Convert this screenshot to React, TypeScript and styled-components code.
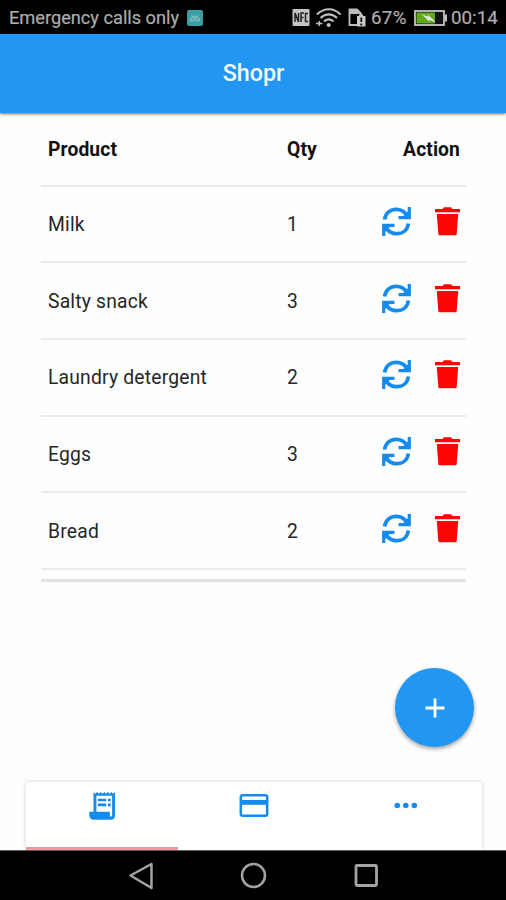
import React from "react";
import styled, { createGlobalStyle } from "styled-components";

const BLUE = "#2196f3";
const ICON_BLUE = "#168bee";

const GlobalStyle = createGlobalStyle`
  * { box-sizing: border-box; }
  body { margin: 0; background: #fefefe; font-family: Roboto, "Noto Sans", sans-serif; }
  svg { display: block; flex: none; }
`;

const Screen = styled.div`
  width: 506px;
  height: 900px;
  display: flex;
  flex-direction: column;
  overflow: hidden;
  background: #fefefe;
`;

const StatusBar = styled.div`
  height: 34px;
  flex: none;
  display: flex;
  align-items: center;
  padding: 2px 7px 0 9px;
  background: #000;
  color: #adadad;
  font-size: 18px;
  line-height: 32px;
  white-space: nowrap;
`;

const Carrier = styled.span`
  width: 178px;
  font-size: 18.2px;
  -webkit-text-stroke: 0.2px #adadad;
`;

const StatusIcons = styled.div`
  margin-left: auto;
  display: flex;
  align-items: center;
`;

const Percent = styled.span`
  width: 42px;
  margin-left: -1px;
  margin-right: 1px;
  font-size: 18.8px;
  letter-spacing: 0.3px;
  -webkit-text-stroke: 0.2px #adadad;
`;

const Clock = styled.span`
  width: 48px;
  font-size: 18.8px;
  -webkit-text-stroke: 0.2px #adadad;
`;

const Header = styled.header`
  height: 79px;
  flex: none;
  display: flex;
  align-items: center;
  justify-content: center;
  padding: 0 0 2px 1px;
  background: ${BLUE};
  color: #f4faff;
  font-size: 23.3px;
  font-weight: 500;
  box-shadow: 0 1px 3px rgba(0, 0, 0, 0.6);
  z-index: 1;
`;

const Main = styled.main`
  flex: 1;
  display: flex;
  flex-direction: column;
  padding: 0 40px 0 41px;
`;

const Row = styled.div<{ $head?: boolean }>`
  height: ${(p) => (p.$head ? "73.5px" : "76.7px")};
  flex: none;
  display: grid;
  grid-template-columns: 239px 60px 1fr;
  align-items: center;
  padding: 0 6px 0 7px;
  border-bottom: 2px solid #ebebeb;
  color: ${(p) => (p.$head ? "#111" : "#262626")};
  font-size: 19.3px;
  font-weight: ${(p) => (p.$head ? 700 : 400)};
  letter-spacing: ${(p) => (p.$head ? "0.1px" : "0.2px")};
`;

const Label = styled.span<{ $end?: boolean }>`
  padding-top: 1px;
  text-align: ${(p) => (p.$end ? "right" : "left")};
`;

const Actions = styled.div`
  display: flex;
  justify-content: flex-end;
  gap: 24px;
  padding-bottom: 5px;
`;

const TableEnd = styled.div`
  flex: none;
  height: 3px;
  margin-top: 9px;
  background: #e2e2e2;
`;

const AddButton = styled.button`
  width: 79px;
  height: 79px;
  margin: auto -8px 35px auto;
  flex: none;
  display: flex;
  align-items: center;
  justify-content: center;
  border: 0;
  border-radius: 50%;
  background: ${BLUE};
  box-shadow: 0 2px 4px rgba(0, 0, 0, 0.38);
`;

const Tabs = styled.nav`
  height: 68px;
  flex: none;
  display: grid;
  grid-template-columns: repeat(3, 1fr);
  margin: 0 24px 0 26px;
  background: #fff;
  box-shadow: 0 0 4px rgba(0, 0, 0, 0.2);
`;

const Tab = styled.div<{ $active?: boolean }>`
  display: flex;
  justify-content: center;
  align-items: flex-start;
  padding-top: 7px;
  border-bottom: 3px solid ${(p) => (p.$active ? "#ee9a9d" : "transparent")};
`;

const NavBar = styled.div`
  height: 50px;
  flex: none;
  display: flex;
  justify-content: center;
  align-items: center;
  gap: 83px;
  background: #000;
  border-top: 1px solid #5b5b5b;
  z-index: 1;
`;

const RefreshIcon = () => (
  <svg width="29" height="29" viewBox="0 0 29 29" fill="none" stroke={ICON_BLUE} strokeWidth="3.7">
    <path d="M2.600 12.600C3.500 5.900 8.500 2.300 14.400 2.300c4.400 0 8 2 10.800 6.100" />
    <path d="M26.400 16.400c-.9 6.700-5.900 10.300-11.800 10.300-4.400 0-8-2-10.800-6.100" />
    <path d="M27.300 0v10.600H16.500M1.700 29V18.400h10.800" strokeWidth="3.200" />
    <path d="M20.500 10 27 3v7zM8.500 19 2 26v-7z" fill={ICON_BLUE} stroke="none" />
  </svg>
);

const TrashIcon = () => (
  <svg width="25" height="29" viewBox="0 0 25 29" fill="#fb0505">
    <path d="M0 1.900h7.500L9 .3h7l1.500 1.600H25v3.400H0z" />
    <path d="M1.800 7h21.400L21.700 27a1.400 1.400 0 0 1-1.400 1.300H4.700A1.400 1.400 0 0 1 3.300 27z" />
  </svg>
);

const items = [
  { name: "Milk", qty: 1 },
  { name: "Salty snack", qty: 3 },
  { name: "Laundry detergent", qty: 2 },
  { name: "Eggs", qty: 3 },
  { name: "Bread", qty: 2 },
];

export default function App() {
  return (
    <Screen>
      <GlobalStyle />
      <StatusBar>
        <Carrier>Emergency calls only</Carrier>
        <svg width="16" height="16" viewBox="0 0 16 16">
          <rect width="16" height="16" rx="2" fill="#3a9da3" />
          <path d="M3 11a5 5 0 0 1 10 0zM4 4l2 3M12 4l-2 3" fill="#73b8ba" stroke="#73b8ba" />
          <path d="M5.500 9h1.500M9 9h1.500" stroke="#2f858b" />
        </svg>
        <StatusIcons>
          <svg width="80" height="20" viewBox="0 0 80 20" fill="none" stroke="#bdbdbd">
            <rect x=".5" y="1" width="17" height="17" rx="1" fill="#c4c4c4" stroke="none" />
            <path d="M3 14V5l3.500 9V5M9 14V5h3M9 9.500h2.500M16 5.500h-2.500v8H16" stroke="#222" strokeWidth="1.500" />
            <path d="M25 6.500c7-7 17-7 23.500 0M28.500 10c5-4.800 11.500-4.800 16.500 0M32 13.500c3-2.600 6.500-2.600 9.500 0" strokeWidth="2.100" />
            <circle cx="36.700" cy="17" r="2" fill="#c5c5c5" stroke="none" />
            <path d="M24 15.500h6.500M27.200 13v5" strokeWidth="1.500" />
            <path d="M65 17h-7.500V1.500h7.500l4 4V7" strokeWidth="1.800" />
            <path d="M57 1h8l5 5H57z" fill="#bbb" stroke="none" />
            <path d="M65 8h2V6.500h4V8h2.500v10.500H65z" fill="#c9c9c9" stroke="none" />
            <path d="M69.300 9.500v4.500m0 1.500v2" stroke="#111" strokeWidth="1.800" />
          </svg>
          <Percent>67%</Percent>
          <svg width="37" height="18" viewBox="0 0 37 18">
            <rect x="1" y="2" width="29" height="14" fill="#111" stroke="#c4c4c4" strokeWidth="1.800" />
            <rect x="2.500" y="3.500" width="18.500" height="11" fill="#62a91d" />
            <path d="M31 5.500h2v7h-2z" fill="#c4c4c4" />
            <path d="m8 5.500 6 2V5.500l7 7v.5l-6-2v1.500z" fill="#e0e7d8" />
          </svg>
          <Clock>00:14</Clock>
        </StatusIcons>
      </StatusBar>
      <Header>Shopr</Header>
      <Main>
        <Row $head>
          <Label>Product</Label>
          <Label>Qty</Label>
          <Label $end>Action</Label>
        </Row>
        {items.map((item) => (
          <Row key={item.name}>
            <Label>{item.name}</Label>
            <Label>{item.qty}</Label>
            <Actions>
              <RefreshIcon />
              <TrashIcon />
            </Actions>
          </Row>
        ))}
        <TableEnd />
        <AddButton aria-label="Add">
          <svg width="20" height="20" viewBox="0 0 20 20" stroke="#fff" strokeWidth="2.800">
            <path d="M10 .5v19M.5 10h19" />
          </svg>
        </AddButton>
      </Main>
      <Tabs>
        <Tab $active>
          <svg width="34" height="34" viewBox="0 0 34 34" fill={ICON_BLUE}>
            <path
              fillRule="evenodd"
              d="M8.500 3l1.800 1.700L12.100 3l1.800 1.700L15.700 3l1.800 1.700L19.300 3l1.800 1.700L22.900 3l1.800 1.700L26.500 3l1.800 1.700L30 3v23.500a4.300 4.300 0 0 1-4.300 4.200H8.500A4.200 4.200 0 0 1 4.300 26.500v-3.700h4.200zM11.400 6.800v16h13.400v3.700a1.150 1.150 0 0 0 2.300 0V6.800z"
            />
            <path d="M12.800 9.700h8.500v2.600h-8.500zM23 9.700h2.700v2.600H23zM12.800 14.600h8.500v2.600h-8.500zM23 14.600h2.700v2.600H23z" />
          </svg>
        </Tab>
        <Tab>
          <svg width="34" height="34" viewBox="0 0 34 34">
            <rect x="3.800" y="6.300" width="26.400" height="20.400" rx="2" fill="none" stroke={ICON_BLUE} strokeWidth="2.500" />
            <path d="M4 11h26v4.800H4z" fill={ICON_BLUE} />
          </svg>
        </Tab>
        <Tab>
          <svg width="34" height="34" viewBox="0 0 34 34" fill={ICON_BLUE}>
            <circle cx="8.300" cy="16.500" r="2.800" />
            <circle cx="16.800" cy="16.500" r="2.800" />
            <circle cx="25.300" cy="16.500" r="2.800" />
          </svg>
        </Tab>
      </Tabs>
      <NavBar>
        <svg width="30" height="30" viewBox="0 0 30 30" fill="none" stroke="#a3a3a3" strokeWidth="2.500">
          <path d="M26.500 3v24l-21-12.500z" strokeLinejoin="round" />
        </svg>
        <svg width="30" height="30" viewBox="0 0 30 30" fill="none" stroke="#a3a3a3" strokeWidth="2.500">
          <circle cx="15.500" cy="14.500" r="11.500" />
        </svg>
        <svg width="30" height="30" viewBox="0 0 30 30" fill="none" stroke="#a3a3a3" strokeWidth="2.800">
          <rect x="5" y="4.500" width="20.500" height="20" rx="1" />
        </svg>
      </NavBar>
    </Screen>
  );
}
